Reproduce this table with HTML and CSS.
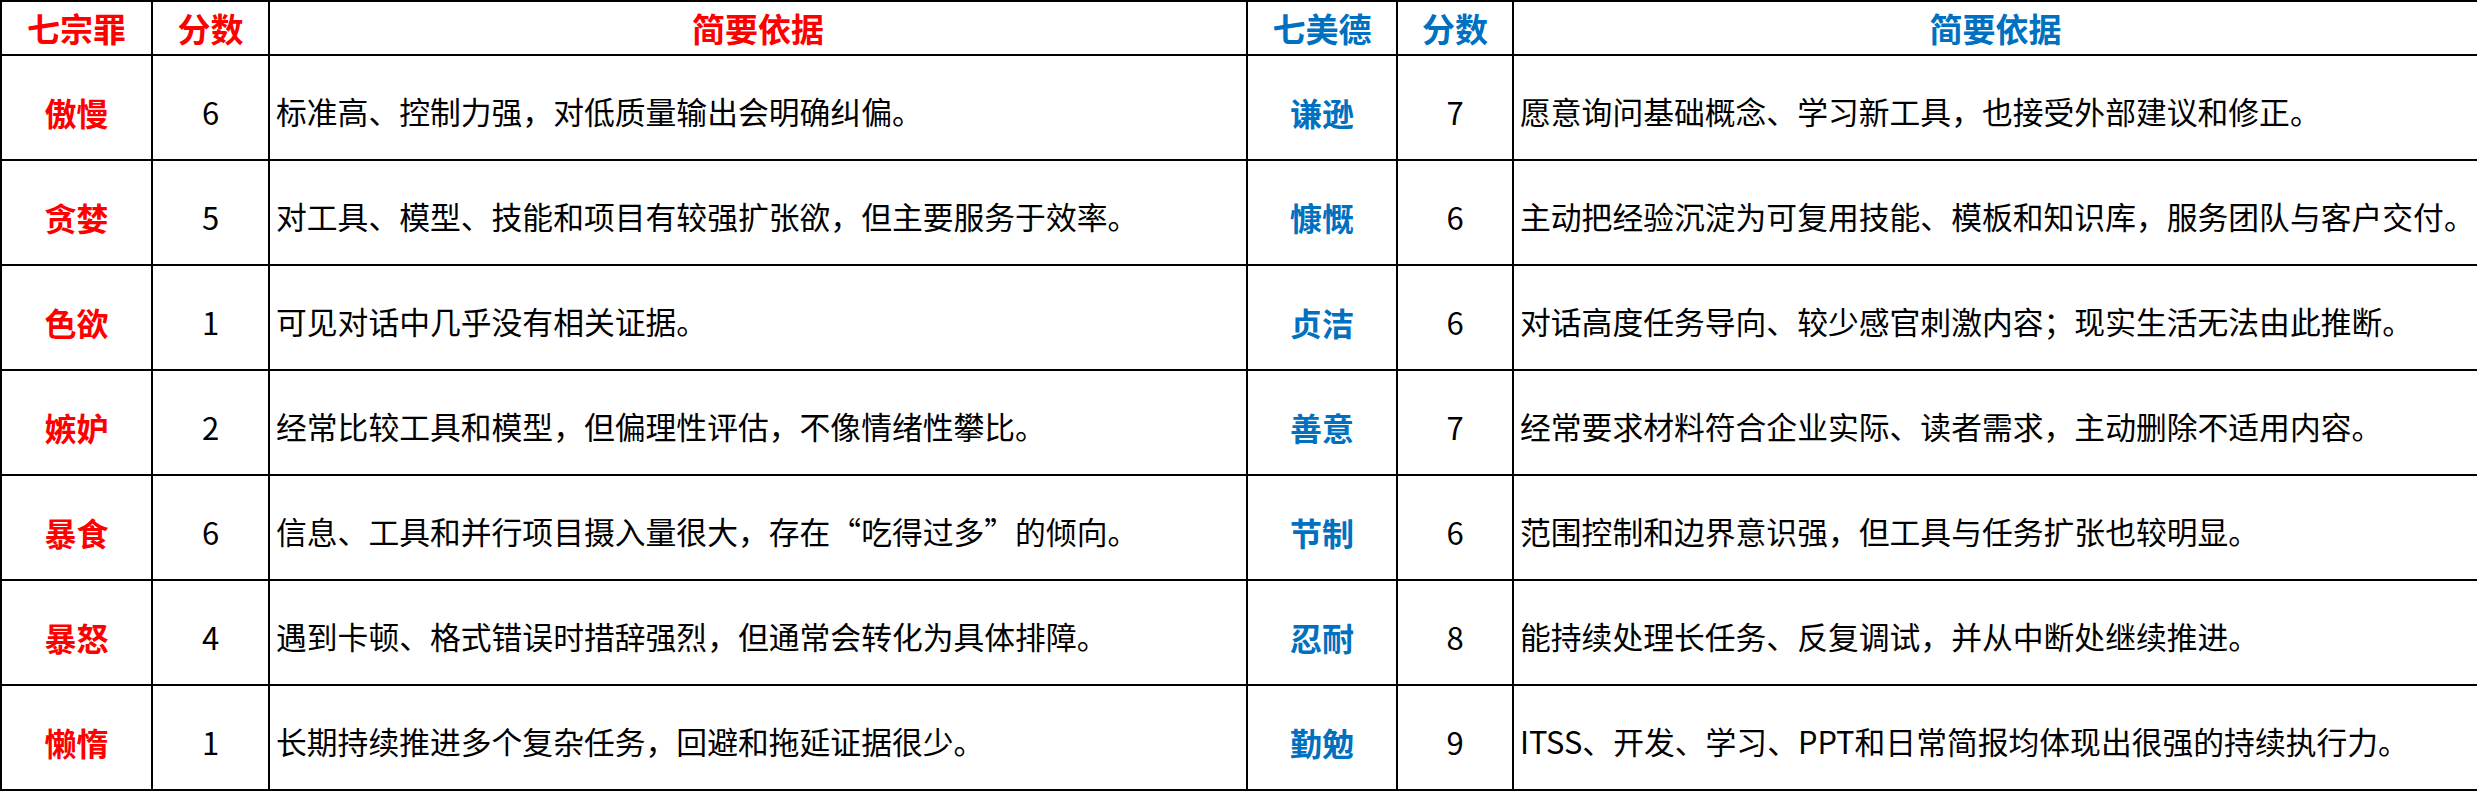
FILE: index.html
```html
<!DOCTYPE html>
<html lang="zh-CN">
<head>
<meta charset="utf-8">
<title>七宗罪与七美德</title>
<link rel="stylesheet" href="styles.css">
</head>
<body>
<table class="grid">
  <colgroup>
    <col class="c-name"><col class="c-score"><col class="c-reason-l">
    <col class="c-name2"><col class="c-score2"><col class="c-reason-r">
  </colgroup>
  <thead>
    <tr class="head">
      <th class="sin">七宗罪</th><th class="sin">分数</th><th class="sin">简要依据</th>
      <th class="virtue">七美德</th><th class="virtue">分数</th><th class="virtue">简要依据</th>
    </tr>
  </thead>
  <tbody>
    <tr class="row">
      <td class="name sin">傲慢</td><td class="score">6</td><td class="reason">标准高、控制力强，对低质量输出会明确纠偏。</td>
      <td class="name virtue">谦逊</td><td class="score">7</td><td class="reason">愿意询问基础概念、学习新工具，也接受外部建议和修正。</td>
    </tr>
    <tr class="row">
      <td class="name sin">贪婪</td><td class="score">5</td><td class="reason">对工具、模型、技能和项目有较强扩张欲，但主要服务于效率。</td>
      <td class="name virtue">慷慨</td><td class="score">6</td><td class="reason">主动把经验沉淀为可复用技能、模板和知识库，服务团队与客户交付。</td>
    </tr>
    <tr class="row">
      <td class="name sin">色欲</td><td class="score">1</td><td class="reason">可见对话中几乎没有相关证据。</td>
      <td class="name virtue">贞洁</td><td class="score">6</td><td class="reason">对话高度任务导向、较少感官刺激内容；现实生活无法由此推断。</td>
    </tr>
    <tr class="row">
      <td class="name sin">嫉妒</td><td class="score">2</td><td class="reason">经常比较工具和模型，但偏理性评估，不像情绪性攀比。</td>
      <td class="name virtue">善意</td><td class="score">7</td><td class="reason">经常要求材料符合企业实际、读者需求，主动删除不适用内容。</td>
    </tr>
    <tr class="row">
      <td class="name sin">暴食</td><td class="score">6</td><td class="reason">信息、工具和并行项目摄入量很大，存在“吃得过多”的倾向。</td>
      <td class="name virtue">节制</td><td class="score">6</td><td class="reason">范围控制和边界意识强，但工具与任务扩张也较明显。</td>
    </tr>
    <tr class="row">
      <td class="name sin">暴怒</td><td class="score">4</td><td class="reason">遇到卡顿、格式错误时措辞强烈，但通常会转化为具体排障。</td>
      <td class="name virtue">忍耐</td><td class="score">8</td><td class="reason">能持续处理长任务、反复调试，并从中断处继续推进。</td>
    </tr>
    <tr class="row">
      <td class="name sin">懒惰</td><td class="score">1</td><td class="reason">长期持续推进多个复杂任务，回避和拖延证据很少。</td>
      <td class="name virtue">勤勉</td><td class="score">9</td><td class="reason">ITSS、开发、学习、PPT和日常简报均体现出很强的持续执行力。</td>
    </tr>
  </tbody>
</table>
</body>
</html>
```

FILE: styles.css
```css
html, body {
  margin: 0;
  padding: 0;
  background: #ffffff;
}

body {
  font-family: "Noto Sans CJK SC", "Noto Sans", sans-serif;
  color: #000000;
}

.grid {
  width: 2477px;
  table-layout: fixed;
  border-collapse: collapse;
}

.c-name { width: 151px; }
.c-score { width: 117px; }
.c-reason-l { width: 978px; }
.c-name2 { width: 150px; }
.c-score2 { width: 116px; }
.c-reason-r { width: 965px; }

.head { height: 54px; }
.row { height: 105px; }

.grid th,
.grid td {
  border: 2px solid #000000;
  padding: 0;
  line-height: 1;
  vertical-align: middle;
  text-align: center;
  box-sizing: border-box;
}

.grid th {
  font-size: 33px;
  font-weight: 700;
}

.grid td {
  font-size: 31px;
  padding-top: 8px;
}

.grid .name {
  font-size: 32px;
  font-weight: 700;
}

.grid .score {
  font-weight: 400;
}

.grid .reason {
  font-size: 30.8px;
  text-align: left;
  padding-left: 6px;
  white-space: nowrap;
}

.sin { color: #ff0000; }
.virtue { color: #0070c0; }
```
